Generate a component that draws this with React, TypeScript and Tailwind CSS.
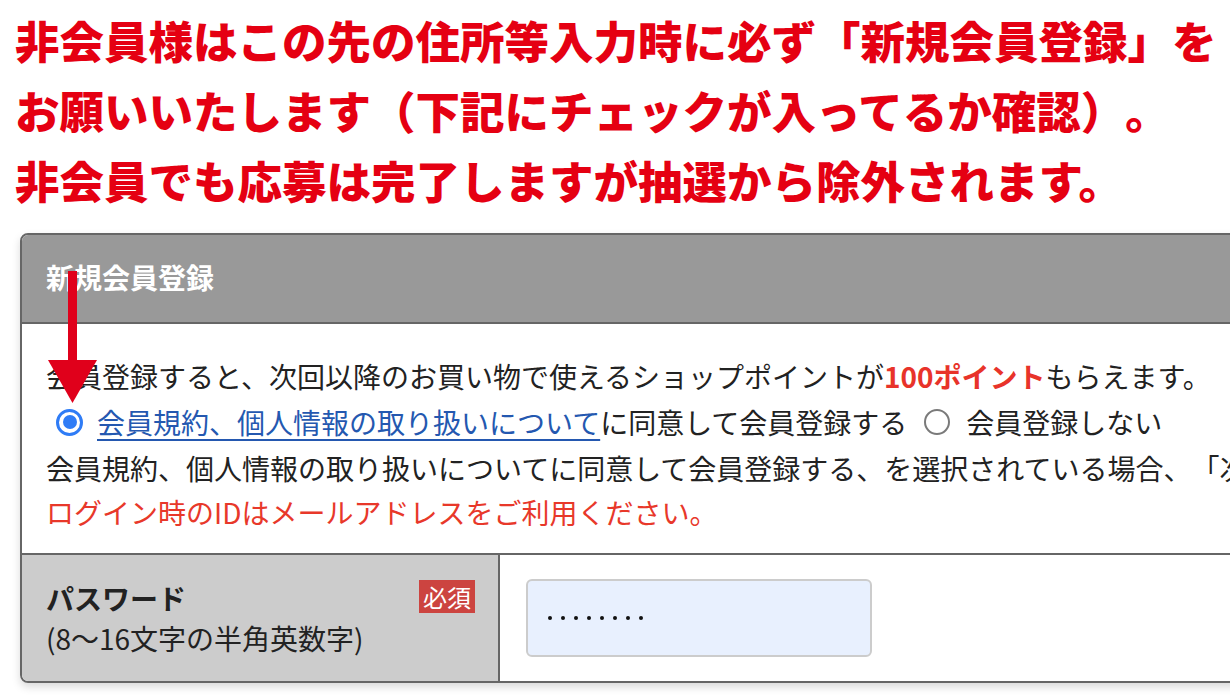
import React from "react";

function RadioChecked() {
  return (
    <span className="inline-flex w-[27px] h-[27px] rounded-full border-[3px] border-[#2f7cf6] bg-white items-center justify-center shrink-0">
      <span className="block w-[14px] h-[14px] rounded-full bg-[#2f7cf6]" />
    </span>
  );
}

function RadioUnchecked() {
  return (
    <span className="inline-block w-[26px] h-[26px] rounded-full border-2 border-[#7a7a7a] bg-white shrink-0" />
  );
}

export default function App() {
  return (
    <div className="relative w-[1230px] h-[696px] overflow-hidden bg-white font-['Noto_Sans_CJK_JP',sans-serif] text-[#222] [text-spacing-trim:space-all]">
      <div className="pl-[15px] pt-[5px] text-[44.5px] leading-[70px] font-black text-[#e50012] whitespace-nowrap">
        <div>非会員様はこの先の住所等入力時に必ず「新規会員登録」を</div>
        <div>お願いいたします（下記にチェックが入ってるか確認）。</div>
        <div>非会員でも応募は完了しますが抽選から除外されます。</div>
      </div>

      <div className="mt-[18px] ml-[20px] w-[1250px] border-2 border-[#666] rounded-[8px] overflow-hidden shadow-[0_4px_8px_rgba(0,0,0,0.15)]">
        <div className="h-[89px] bg-[#999] border-b-2 border-[#666] flex items-center pl-[24px] pb-[3px]">
          <span className="text-[28px] font-bold text-white">新規会員登録</span>
        </div>

        <div className="bg-white pl-[24px] pt-[30px] pb-[19px] text-[28px] leading-[44px] whitespace-nowrap border-b-2 border-[#666]">
          <div>
            会員登録すると、次回以降のお買い物で使えるショップポイントが
            <span className="font-bold text-[#e8332a]">100ポイント</span>
            もらえます。
          </div>
          <div className="h-[48px] flex items-center">
            <span className="ml-[10px] mr-[14px] flex items-center">
              <RadioChecked />
            </span>
            <span className="text-[#2458b0] underline underline-offset-[5px] decoration-[2px]">
              会員規約、個人情報の取り扱いについて
            </span>
            <span>に同意して会員登録する</span>
            <span className="ml-[17px] mr-[16px] flex items-center">
              <RadioUnchecked />
            </span>
            <span>会員登録しない</span>
          </div>
          <div>
            会員規約、個人情報の取り扱いについてに同意して会員登録する、を選択されている場合、「次回
          </div>
          <div className="text-[#e8382a]">ログイン時のIDはメールアドレスをご利用ください。</div>
        </div>

        <div className="flex h-[126px]">
          <div className="w-[478px] bg-[#ccc] border-r-2 border-[#666] pl-[24px] pr-[23px] pt-[23px] flex justify-between">
            <div className="text-[28px] leading-[40px] whitespace-nowrap">
              <div className="font-bold">パスワード</div>
              <div>(8〜16文字の半角英数字)</div>
            </div>
            <div className="mt-[2px] h-[33px] px-[4px] bg-[#cc4440] text-white text-[24px] leading-[33px]">
              必須
            </div>
          </div>
          <div className="flex-1 bg-white pl-[26px] pt-[24px]">
            <div className="w-[346px] h-[78px] rounded-[6px] border-2 border-[#ccc] bg-[#e8f0fe] flex items-center pl-[20px] gap-[9px]">
              {Array.from({ length: 8 }).map((_, i) => (
                <span key={i} className="block w-[4px] h-[4px] rounded-full bg-[#111]" />
              ))}
            </div>
          </div>
        </div>
      </div>

      <svg
        className="absolute left-[46px] top-[271px]"
        width="54"
        height="134"
        viewBox="0 0 54 134"
      >
        <rect x="22" y="0" width="9" height="92" fill="#e0001b" />
        <polygon points="2,89 51,89 26.5,132" fill="#e0001b" />
      </svg>
    </div>
  );
}
